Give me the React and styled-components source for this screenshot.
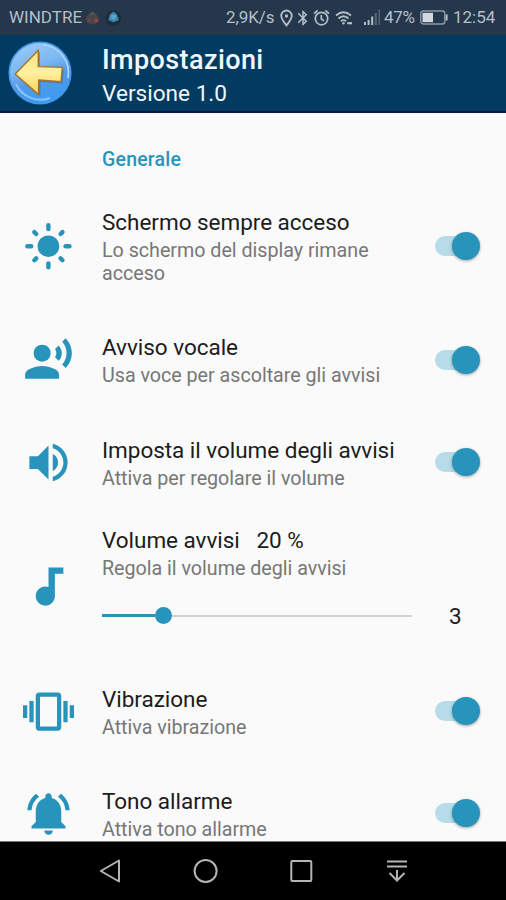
import React from 'react'
import styled, { createGlobalStyle } from 'styled-components'
import {
  MdAudiotrack,
  MdBluetooth,
  MdNotificationsActive,
  MdRecordVoiceOver,
  MdVibration,
  MdVolumeUp,
} from 'react-icons/md'

const colors = {
  accent: '#2893bb',
  track: '#b5dce8',
  background: '#fafafa',
  appBar: '#013b61',
  statusBar: '#24374b',
  status: '#b5bfc8',
  text: '#1c1c1c',
  text2: '#777777',
  nav: '#b4b4b4',
}

const GlobalStyle = createGlobalStyle`
  * {
    box-sizing: border-box;
  }
  body {
    margin: 0;
    background: ${colors.background};
    font-family: Roboto, 'Liberation Sans', sans-serif;
  }
`

const Screen = styled.div`
  width: 506px;
  height: 900px;
  display: flex;
  flex-direction: column;
  overflow: hidden;
  background: ${colors.background};
`

const StatusBar = styled.div`
  flex: none;
  height: 35px;
  padding: 0 10px 0 9px;
  display: flex;
  align-items: center;
  background: ${colors.statusBar};
  color: ${colors.status};

  svg {
    flex: none;
    display: block;
  }
`

const StatusText = styled.span`
  flex: none;
  width: ${(props) => props.$width}px;
  margin-left: ${(props) => props.$gap ?? 0}px;
  font-size: 17px;
  letter-spacing: ${(props) => props.$spacing ?? 0}px;
  line-height: 35px;
  white-space: nowrap;
`

const StatusSlot = styled.span`
  margin-left: ${(props) => props.$gap}px;
`

const AppBar = styled.header`
  flex: none;
  height: 78px;
  padding-left: 8px;
  display: flex;
  align-items: center;
  background: ${colors.appBar};
  border-bottom: 2px solid #0a1550;
  color: #f2f6f9;
`

const BackButton = styled.button`
  width: 64px;
  height: 64px;
  margin: 0 30px 0 0;
  padding: 0;
  border: 0;
  background: none;

  svg {
    display: block;
  }
`

const HeaderText = styled.div`
  padding-top: 8px;
`

const Heading = styled.h1`
  margin: 0;
  font-size: 27px;
  font-weight: 500;
  line-height: 34px;
  letter-spacing: 0.4px;
`

const Version = styled.div`
  font-size: 22.6px;
  line-height: 34px;
`

const List = styled.main`
  flex: 1;
  min-height: 0;
  overflow: hidden;
`

const Section = styled.h2`
  margin: 0;
  height: 71px;
  padding: 35px 0 0 102px;
  color: ${colors.accent};
  font-size: 19.5px;
  font-weight: 500;
  line-height: 24px;
  letter-spacing: 0.2px;
`

const Row = styled.section`
  height: ${(props) => props.$height ?? 102}px;
  padding: 0 26px 0 23px;
  display: flex;
  align-items: center;
`

const RowIcon = styled.div`
  flex: none;
  width: 51px;
  height: 51px;
  margin-right: 28px;
  color: ${colors.accent};

  svg {
    display: block;
    width: 51px;
    height: 51px;
  }
`

const RowBody = styled.div`
  flex: 1;
  min-width: 0;
  padding-bottom: ${(props) => props.$bottom ?? 0}px;
`

const Title = styled.div`
  color: ${colors.text};
  font-size: 22.5px;
  line-height: 30px;
  letter-spacing: -0.03px;
  white-space: pre;
`

const Summary = styled.div`
  width: 300px;
  margin-top: 2px;
  color: ${colors.text2};
  font-size: 19.7px;
  line-height: 23px;
  letter-spacing: -0.02px;
`

const Track = styled.div`
  width: 42px;
  height: 20px;
  margin-right: 3px;
  display: flex;
  align-items: center;
  justify-content: flex-end;
  border-radius: 10px;
  background: ${colors.track};
`

const Knob = styled.div`
  flex: none;
  width: 28px;
  height: 28px;
  margin-right: -2.5px;
  border-radius: 50%;
  background: ${colors.accent};
  box-shadow: 0 1px 3px rgba(0, 0, 0, 0.35);
`

const SliderRow = styled.div`
  height: 34px;
  margin-top: 19px;
  display: flex;
  align-items: center;
`

const Slider = styled.div`
  width: 310px;
  display: flex;
  align-items: center;
`

const SliderFill = styled.div`
  height: 3px;
  background: ${colors.accent};
`

const SliderThumb = styled.div`
  flex: none;
  width: 17px;
  height: 17px;
  border-radius: 50%;
  background: ${colors.accent};
`

const SliderRest = styled.div`
  flex: 1;
  height: 2px;
  background: #d2d2d2;
`

const SliderValue = styled.div`
  margin-left: 37px;
  color: ${colors.text};
  font-size: 22.5px;
  line-height: 34px;
`

const NavBar = styled.nav`
  flex: none;
  height: 59px;
  padding: 0 95px;
  display: flex;
  align-items: center;
  justify-content: space-between;
  background: #000;
  border-top: 1px solid #777;

  svg {
    display: block;
  }
`

const SunIcon = () => (
  <svg viewBox='0 0 51 51' stroke='currentColor' strokeWidth='4.4' strokeLinecap='round'>
    <circle cx='25.4' cy='25.2' r='10.8' fill='currentColor' stroke='none' />
    {[0, 45, 90, 135, 180, 225, 270, 315].map((angle) => (
      <line
        key={angle}
        x1='25.4'
        x2='25.4'
        y1={angle % 90 ? 5.3 : 4.2}
        y2='8'
        transform={`rotate(${angle} 25.4 25.2)`}
      />
    ))}
  </svg>
)

const BackIcon = () => (
  <svg width='64' height='64' viewBox='0 0 64 64'>
    <defs>
      <linearGradient id='ball' x1='0' y1='0' x2='0.35' y2='1'>
        <stop offset='0' stopColor='#9fcdf8' />
        <stop offset='0.45' stopColor='#7db9f3' />
        <stop offset='0.7' stopColor='#5499e8' />
        <stop offset='1' stopColor='#3f9bf0' />
      </linearGradient>
      <linearGradient id='arrow' x1='0' y1='0' x2='0' y2='1'>
        <stop offset='0' stopColor='#ffe27a' />
        <stop offset='0.5' stopColor='#fff0a0' />
        <stop offset='1' stopColor='#ffd257' />
      </linearGradient>
    </defs>
    <circle cx='32' cy='32' r='30.8' fill='url(#ball)' stroke='#4795e4' strokeWidth='1.5' />
    <path d='M35 3.5A28.5 28.5 0 0 1 60 37' fill='none' stroke='#b0d8fb' strokeWidth='1.6' />
    <path d='M8 43A27 27 0 0 0 42 57' fill='none' stroke='#9fd6ff' strokeWidth='2' opacity='0.7' />
    <path
      d='M7.2 33.5L30.5 9.5V26L54.3 26.6L53 41L31 39.5V54Z'
      transform='translate(1.5 1.5)'
      fill='#315f9b'
      opacity='0.45'
    />
    <path
      d='M7.2 33L30.3 9.2V25.6L54.3 26.4L53 40.8L30.6 39V53.6Z'
      fill='url(#arrow)'
      stroke='#a87325'
      strokeWidth='1.4'
      strokeLinejoin='round'
    />
  </svg>
)

const StatusIcons = () => (
  <>
    <StatusSlot $gap={5}>
      <svg width='13' height='18' viewBox='0 0 13 18' fill='none' stroke='currentColor'>
        <path d='M6.5 16.5C4 13 1.2 10 1.2 6.8a5.3 5.3 0 0 1 10.6 0C11.8 10 9 13 6.5 16.5Z' strokeWidth='1.8' />
        <circle cx='6.5' cy='7' r='1.7' fill='currentColor' stroke='none' />
      </svg>
    </StatusSlot>
    <StatusSlot $gap={1}>
      <MdBluetooth size={18} />
    </StatusSlot>
    <StatusSlot $gap={1}>
      <svg width='17' height='18' viewBox='0 0 17 18' fill='none' stroke='currentColor' strokeWidth='1.7'>
        <circle cx='8.5' cy='9.6' r='6.2' />
        <path d='M1 4.6L4.6 1.5M12.4 1.5L16 4.6M8.3 6V10L11 11.7' />
      </svg>
    </StatusSlot>
    <StatusSlot $gap={5}>
      <svg width='18' height='16' viewBox='0 0 18 16' fill='none' stroke='currentColor' strokeWidth='1.7'>
        <path d='M1 5.5Q8.5 -1 16 5.5M3.5 8.5Q8.5 4 13.5 8.5M6 11.3Q8.5 9 11 11.3' />
        <circle cx='8.5' cy='13.3' r='1.2' fill='currentColor' stroke='none' />
        <path d='M12.2 13.2H17' strokeWidth='2.2' />
      </svg>
    </StatusSlot>
    <StatusSlot $gap={11}>
      <svg width='17' height='17' viewBox='0 0 17 17' fill='currentColor'>
        <path d='M0 13h2v3H0zM3.6 11h2v5h-2zM7.2 7.5h2V16h-2z' />
        <path d='M10.8 4h2v12h-2zM14.6 0.5h1.4V16h-1.4z' opacity='0.35' />
      </svg>
    </StatusSlot>
  </>
)

const Battery = () => (
  <svg width='28' height='15' viewBox='0 0 28 15' fill='none'>
    <rect x='0.8' y='1' width='24' height='13' rx='2.5' stroke='#8c98a4' strokeWidth='1.4' />
    <rect x='2.5' y='2.8' width='10.5' height='9.4' fill='#d2d8dd' />
    <path d='M26.6 4.5V10.5' stroke='#b5bfc8' strokeWidth='2' />
  </svg>
)

const Notifications = () => (
  <svg width='36' height='18' viewBox='0 0 36 18'>
    <ellipse cx='7.5' cy='10' rx='6.5' ry='5.5' fill='#4b4345' />
    <path d='M4 6Q7.5 -1 11 6Z' fill='#505259' />
    <circle cx='4' cy='11.5' r='1.8' fill='#694a46' />
    <circle cx='11.2' cy='11.5' r='2' fill='#8d4840' />
    <circle cx='28.5' cy='9' r='7.6' fill='#1d2a36' />
    <path d='M28.5 2.5L31.8 5L34 11L28.5 13.5L23 11L25.2 5Z' fill='#397fa8' />
    <circle cx='28.5' cy='8' r='2.8' fill='#54a4c8' />
  </svg>
)

const Switch = () => (
  <Track>
    <Knob />
  </Track>
)

const Setting = ({ icon, title, summary, height }) => (
  <Row $height={height}>
    <RowIcon>{icon}</RowIcon>
    <RowBody>
      <Title>{title}</Title>
      <Summary>{summary}</Summary>
    </RowBody>
    <Switch />
  </Row>
)

const VolumeSetting = ({ percent, value }) => (
  <Row $height={147}>
    <RowIcon>
      <MdAudiotrack />
    </RowIcon>
    <RowBody $bottom={16}>
      <Title>{`Volume avvisi   ${percent} %`}</Title>
      <Summary>Regola il volume degli avvisi</Summary>
      <SliderRow>
        <Slider>
          <SliderFill style={{ width: (310 - 44) * (percent / 100) }} />
          <SliderThumb />
          <SliderRest />
        </Slider>
        <SliderValue>{value}</SliderValue>
      </SliderRow>
    </RowBody>
  </Row>
)

const App = () => (
  <Screen>
    <GlobalStyle />
    <StatusBar>
      <StatusText $width={76}>WINDTRE</StatusText>
      <Notifications />
      <StatusText $width={49} $gap={105} $spacing={-0.1}>
        2,9K/s
      </StatusText>
      <StatusIcons />
      <StatusText $width={32} $gap={3} $spacing={-0.3}>
        47%
      </StatusText>
      <StatusSlot $gap={4}>
        <Battery />
      </StatusSlot>
      <StatusText $width={42} $gap={5}>
        12:54
      </StatusText>
    </StatusBar>
    <AppBar>
      <BackButton aria-label='Indietro'>
        <BackIcon />
      </BackButton>
      <HeaderText>
        <Heading>Impostazioni</Heading>
        <Version>Versione 1.0</Version>
      </HeaderText>
    </AppBar>
    <List>
      <Section>Generale</Section>
      <Setting
        height={124}
        icon={<SunIcon />}
        title='Schermo sempre acceso'
        summary='Lo schermo del display rimane acceso'
      />
      <Setting
        height={103}
        icon={<MdRecordVoiceOver />}
        title='Avviso vocale'
        summary='Usa voce per ascoltare gli avvisi'
      />
      <Setting
        icon={<MdVolumeUp />}
        title='Imposta il volume degli avvisi'
        summary='Attiva per regolare il volume'
      />
      <VolumeSetting percent={20} value={3} />
      <Setting icon={<MdVibration />} title='Vibrazione' summary='Attiva vibrazione' />
      <Setting icon={<MdNotificationsActive />} title='Tono allarme' summary='Attiva tono allarme' />
    </List>
    <NavBar>
      <svg width='28' height='28' viewBox='0 0 28 28' fill='none' stroke={colors.nav} strokeWidth='2'>
        <path d='M5.8 14L24 3.5V24.5Z' strokeLinejoin='round' />
      </svg>
      <svg width='28' height='28' viewBox='0 0 28 28' fill='none' stroke={colors.nav} strokeWidth='2'>
        <circle cx='14.6' cy='14' r='11' />
      </svg>
      <svg width='28' height='28' viewBox='0 0 28 28' fill='none' stroke={colors.nav} strokeWidth='2'>
        <rect x='4.3' y='4' width='20' height='20' rx='1' />
      </svg>
      <svg width='28' height='28' viewBox='0 0 28 28' fill='none' stroke={colors.nav} strokeWidth='2'>
        <path d='M4 4.5H24M4 9.5H24M14 13V23M6.5 16L14 23.5L21.5 16' />
      </svg>
    </NavBar>
  </Screen>
)

export default App
